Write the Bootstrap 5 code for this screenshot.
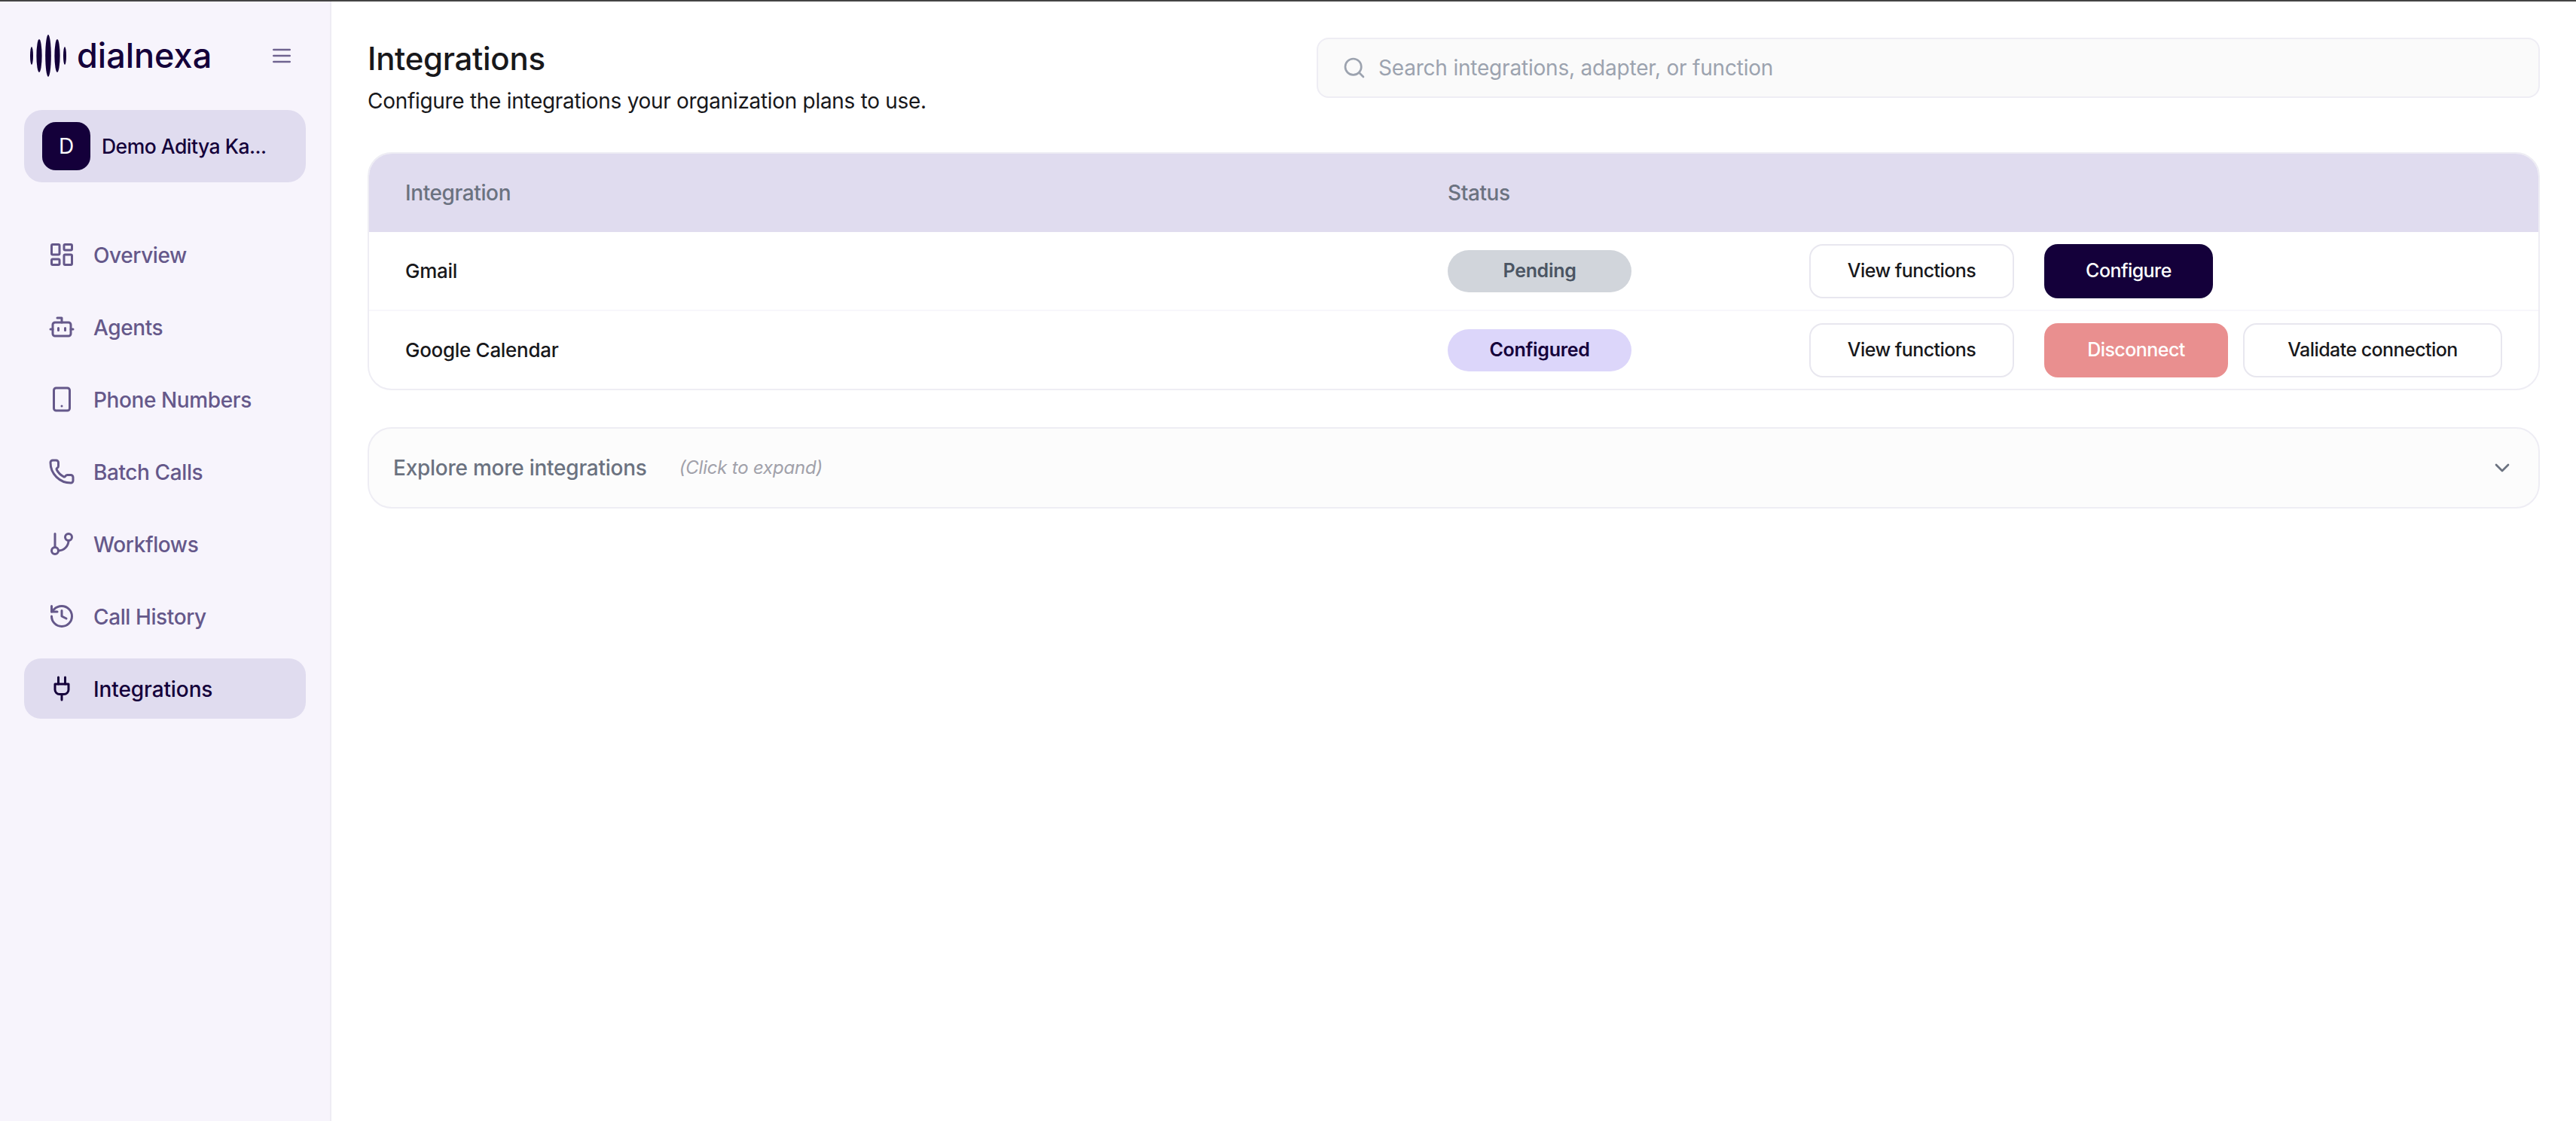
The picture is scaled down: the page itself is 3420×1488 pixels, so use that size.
<!DOCTYPE html>
<html lang="en">
<head>
    <meta charset="UTF-8">
    <meta name="viewport" content="width=device-width, initial-scale=1.0">
    <title>Integrations - dialnexa</title>
    <link href="https://cdn.jsdelivr.net/npm/bootstrap@5.3.0/dist/css/bootstrap.min.css" rel="stylesheet">
    <style>
        html, body { height: 100%; }
        body { font-family: Inter, "Noto Sans", sans-serif; color: #14003a; background: #fff; overflow: hidden; }
        svg.ico { fill: none; stroke: currentColor; stroke-width: 2; stroke-linecap: round; stroke-linejoin: round; flex-shrink: 0; }
        .top-line { height: 2px; background: #444; }

        /* sidebar */
        .sidebar { width: 440px; background: #f7f4fc; border-right: 2px solid #eeecf4; padding: 44px 32px 0; }
        .brand { height: 56px; padding-left: 8px; padding-right: 16px; }
        .brand-name { font-size: 45px; font-weight: 500; line-height: 56px; margin-left: 14px; }
        .menu-btn { color: #6f6390; }
        .account { height: 96px; margin-top: 44px; margin-bottom: 56px; padding: 0 24px; border-radius: 24px; background: #e0dcef; }
        .avatar { width: 64px; height: 64px; border-radius: 18px; background: #14003a; color: #fff; font-size: 28px; }
        .account-name { font-size: 26.5px; font-weight: 500; margin-left: 15px; letter-spacing: -.5px; padding-top: 2px; }
        .side-nav { gap: 16px; }
        .side-nav .nav-link { height: 80px; padding: 0 32px; border-radius: 22px; color: #65588a; font-size: 28px; font-weight: 500; gap: 24px; letter-spacing: -.4px; }
        .side-nav .nav-link span { padding-top: 2px; }
        .side-nav .nav-link.active { background: #e0dcef; color: #14003a; letter-spacing: -.1px; }

        /* main */
        .content { padding: 48px 48px 0; }
        .page-title { font-size: 42px; font-weight: 500; line-height: 52px; margin: 2px 0 10px; color: #18181b; letter-spacing: -.3px; }
        .page-sub { font-size: 28px; line-height: 40px; margin: 0; color: #18181b; letter-spacing: -.3px; }
        .search { width: 1624px; height: 80px; padding: 0 32px; background: #fafafa; border: 2px solid #eeedf4; border-radius: 16px; gap: 16px; color: #9ca3af; }
        .search input { font-size: 28px; color: #374151; letter-spacing: -.2px; outline: 0; }
        .search input::placeholder { color: #9ca3af; }

        .int-table { margin-top: 48px; border: 2px solid #eeedf4; border-radius: 32px; overflow: hidden; }
        .int-table .table { margin: 0; table-layout: fixed; font-size: 28px; }
        .int-table th { background: #e0dcef; color: #6b7280; font-weight: 500; height: 104px; vertical-align: middle; border: 0; padding: 0 0 0 48px; letter-spacing: -.4px; }
        .int-table td { height: 104px; vertical-align: middle; border-bottom: 2px solid #f8f7fb; padding: 0 0 0 48px; color: #18181b; font-size: 26px; font-weight: 500; letter-spacing: -.3px; }
        .int-table tr:last-child td { border-bottom: 0; }
        .col-name { width: 1384px; }
        .col-status { width: 480px; }
        .status-pill { width: 244px; height: 56px; border-radius: 28px; font-size: 25px; font-weight: 600; letter-spacing: -.3px; }
        .pill-pending { background: #d1d5db; color: #4b5563; }
        .pill-configured { background: #dcd6fa; color: #14003a; }
        .act { height: 72px; border-radius: 18px; font-size: 25px; font-weight: 500; padding: 0; letter-spacing: -.55px; }
        .act-outline { background: #fff; border: 2px solid #e8e7ef; color: #18181b; }
        .act-view { width: 272px; margin-right: 40px; }
        .act-config { width: 224px; background: #14003a; color: #fff; border: 0; }
        .act-disc { width: 244px; background: #e98f8f; color: #fff; border: 0; margin-right: 20px; }
        .act-valid { width: 344px; }

        .explore { height: 108px; margin-top: 49px; padding: 0 32px; background: #fcfcfc; border: 2px solid #eeedf4; border-radius: 32px; color: #6b7280; }
        .explore-title { font-size: 28px; font-weight: 500; letter-spacing: -.25px; }
        .explore-hint { font-size: 24px; font-style: italic; color: #a1a1aa; margin-left: 43px; letter-spacing: -.2px; }
    </style>
</head>
<body>
    <div class="d-flex flex-column h-100">
        <div class="top-line"></div>
        <div class="d-flex flex-grow-1">

            <!-- Sidebar -->
            <aside class="sidebar flex-shrink-0">
                <div class="brand d-flex align-items-center justify-content-between">
                    <div class="d-flex align-items-center">
                        <svg width="48" height="56" viewBox="0 0 48 56" fill="#14003a">
                            <ellipse cx="2" cy="28" rx="2" ry="12"/>
                            <ellipse cx="12" cy="28" rx="3.6" ry="22"/>
                            <ellipse cx="24" cy="28" rx="3.8" ry="28"/>
                            <ellipse cx="36" cy="28" rx="3.6" ry="22"/>
                            <ellipse cx="46" cy="28" rx="2" ry="12"/>
                        </svg>
                        <span class="brand-name">dialnexa</span>
                    </div>
                    <svg class="ico menu-btn" width="32" height="32" viewBox="0 0 24 24"><path d="M4 6h16M4 12h16M4 18h16"/></svg>
                </div>

                <div class="account d-flex align-items-center">
                    <div class="avatar d-flex align-items-center justify-content-center flex-shrink-0">D</div>
                    <span class="account-name text-nowrap">Demo Aditya Ka...</span>
                </div>

                <nav class="nav flex-column side-nav">
                    <a class="nav-link d-flex align-items-center" href="#">
                        <svg class="ico" width="36" height="36" viewBox="0 0 24 24"><rect width="7" height="9" x="3" y="3" rx="1"/><rect width="7" height="5" x="14" y="3" rx="1"/><rect width="7" height="9" x="14" y="12" rx="1"/><rect width="7" height="5" x="3" y="16" rx="1"/></svg>
                        <span>Overview</span>
                    </a>
                    <a class="nav-link d-flex align-items-center" href="#">
                        <svg class="ico" width="36" height="36" viewBox="0 0 24 24"><path d="M12 8V4H8"/><rect width="16" height="12" x="4" y="8" rx="2"/><path d="M2 14h2M20 14h2M15 13v2M9 13v2"/></svg>
                        <span>Agents</span>
                    </a>
                    <a class="nav-link d-flex align-items-center" href="#">
                        <svg class="ico" width="36" height="36" viewBox="0 0 24 24"><rect width="14" height="20" x="5" y="2" rx="2"/><path d="M12 18h.01"/></svg>
                        <span>Phone Numbers</span>
                    </a>
                    <a class="nav-link d-flex align-items-center" href="#">
                        <svg class="ico" width="36" height="36" viewBox="0 0 24 24"><path d="M13.832 16.568a1 1 0 0 0 1.213-.303l.355-.465A2 2 0 0 1 17 15h3a2 2 0 0 1 2 2v3a2 2 0 0 1-2 2A18 18 0 0 1 2 4a2 2 0 0 1 2-2h3a2 2 0 0 1 2 2v3a2 2 0 0 1-.8 1.6l-.468.351a1 1 0 0 0-.292 1.233 14 14 0 0 0 6.392 6.384"/></svg>
                        <span>Batch Calls</span>
                    </a>
                    <a class="nav-link d-flex align-items-center" href="#">
                        <svg class="ico" width="36" height="36" viewBox="0 0 24 24"><path d="M6 3v12"/><circle cx="18" cy="6" r="3"/><circle cx="6" cy="18" r="3"/><path d="M18 9a9 9 0 0 1-9 9"/></svg>
                        <span>Workflows</span>
                    </a>
                    <a class="nav-link d-flex align-items-center" href="#">
                        <svg class="ico" width="36" height="36" viewBox="0 0 24 24"><path d="M3 12a9 9 0 1 0 9-9 9.75 9.75 0 0 0-6.74 2.74L3 8"/><path d="M3 3v5h5"/><path d="M12 7v5l4 2"/></svg>
                        <span>Call History</span>
                    </a>
                    <a class="nav-link active d-flex align-items-center" href="#">
                        <svg class="ico" width="36" height="36" viewBox="0 0 24 24"><path d="M12 22v-5M9 8V2M15 8V2"/><path d="M18 8v5a4 4 0 0 1-4 4h-4a4 4 0 0 1-4-4V8Z"/></svg>
                        <span>Integrations</span>
                    </a>
                </nav>
            </aside>

            <!-- Main content -->
            <main class="content flex-grow-1">
                <div class="d-flex justify-content-between align-items-start">
                    <div>
                        <h1 class="page-title">Integrations</h1>
                        <p class="page-sub">Configure the integrations your organization plans to use.</p>
                    </div>
                    <div class="search d-flex align-items-center">
                        <svg class="ico" width="32" height="32" viewBox="0 0 24 24"><circle cx="11" cy="11" r="8"/><path d="m21 21-4.3-4.3"/></svg>
                        <input class="border-0 bg-transparent w-100 shadow-none p-0" type="text" placeholder="Search integrations, adapter, or function">
                    </div>
                </div>

                <div class="int-table">
                    <table class="table">
                        <colgroup><col class="col-name"><col class="col-status"><col></colgroup>
                        <thead>
                            <tr><th>Integration</th><th>Status</th><th></th></tr>
                        </thead>
                        <tbody>
                            <tr>
                                <td>Gmail</td>
                                <td><span class="status-pill pill-pending d-inline-flex align-items-center justify-content-center">Pending</span></td>
                                <td>
                                    <div class="d-flex">
                                        <button class="btn act act-outline act-view">View functions</button>
                                        <button class="btn act act-config">Configure</button>
                                    </div>
                                </td>
                            </tr>
                            <tr>
                                <td>Google Calendar</td>
                                <td><span class="status-pill pill-configured d-inline-flex align-items-center justify-content-center">Configured</span></td>
                                <td>
                                    <div class="d-flex">
                                        <button class="btn act act-outline act-view">View functions</button>
                                        <button class="btn act act-disc">Disconnect</button>
                                        <button class="btn act act-outline act-valid">Validate connection</button>
                                    </div>
                                </td>
                            </tr>
                        </tbody>
                    </table>
                </div>

                <div class="explore d-flex align-items-center">
                    <span class="explore-title">Explore more integrations</span>
                    <span class="explore-hint">(Click to expand)</span>
                    <svg class="ico ms-auto" width="32" height="32" viewBox="0 0 24 24"><path d="m6 9 6 6 6-6"/></svg>
                </div>
            </main>
        </div>
    </div>
    <script src="https://cdn.jsdelivr.net/npm/bootstrap@5.3.0/dist/js/bootstrap.bundle.min.js"></script>
</body>
</html>
